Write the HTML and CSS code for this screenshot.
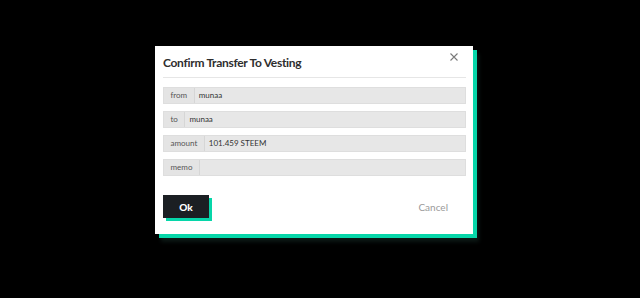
FILE: index.html
```html
<!DOCTYPE html>
<html>
<head>
<meta charset="utf-8">
<link rel="stylesheet" href="styles.css">
</head>
<body>
<div class="modal">
  <div class="header">
    <h1 class="title">Confirm Transfer To Vesting</h1>
    <button class="close" aria-label="Close">
      <svg width="8" height="8" viewBox="0 0 8 8"><path d="M0.5 0.5 L7.5 7.5 M7.5 0.5 L0.5 7.5" stroke="#7a7a7a" stroke-width="1.1" fill="none"/></svg>
    </button>
  </div>
  <div class="rule"></div>
  <div class="fields">
    <div class="group"><span class="label">from</span><span class="value">munaa</span></div>
    <div class="group"><span class="label">to</span><span class="value">munaa</span></div>
    <div class="group"><span class="label">amount</span><span class="value">101.459 STEEM</span></div>
    <div class="group"><span class="label">memo</span><span class="value"></span></div>
  </div>
  <div class="actions">
    <button class="ok">Ok</button>
    <button class="cancel">Cancel</button>
  </div>
</div>
</body>
</html>
```
FILE: styles.css
```css
html, body {
  margin: 0;
  background: #000;
}
body {
  width: 640px;
  height: 298px;
  box-sizing: border-box;
  padding: 46px 0 0 155px;
  font-family: "Lato", "Liberation Sans", sans-serif;
}
.modal {
  width: 318px;
  height: 188px;
  box-sizing: border-box;
  background: #fff;
  box-shadow: 4px 4px 0 #06d6a9, 6px 8px 4px rgba(20,40,35,0.6);
  padding: 6px 7px 0 8px;
  display: flex;
  flex-direction: column;
}
.header {
  display: flex;
  align-items: flex-start;
  justify-content: space-between;
  height: 24px;
}
.title {
  margin: 0;
  font-size: 12px;
  line-height: 16px;
  margin-top: 3px;
  font-weight: 700;
  color: #2e2e2e;
  letter-spacing: -0.3px;
}
.close {
  border: 0;
  background: none;
  padding: 0;
  margin: 1px 8px 0 0;
  width: 8px;
  height: 8px;
  display: flex;
}
.rule {
  height: 1px;
  background: #e6e6e6;
  margin-top: 1px;
}
.fields {
  display: flex;
  flex-direction: column;
  gap: 7px;
  margin-top: 9px;
}
.group {
  display: flex;
  height: 17px;
  box-sizing: border-box;
  border: 1px solid #dedede;
  background: #e7e7e7;
  font-size: 8px;
  line-height: 15px;
}
.label {
  padding: 0 6.5px;
  color: #555;
  border-right: 1px solid #d6d6d6;
  background: #e4e4e4;
}
.value {
  padding: 0 4px;
  color: #333;
  flex: 1;
}
.actions {
  display: flex;
  justify-content: space-between;
  align-items: center;
  margin-top: 19px;
}
.ok {
  width: 46px;
  height: 23px;
  border: 0;
  background: #1b1f23;
  color: #fff;
  font-family: "Lato", "Liberation Sans", sans-serif;
  font-weight: 900;
  font-size: 10px;
  box-shadow: 3px 3px 0 #06d6a9;
  padding: 0;
}
.cancel {
  border: 0;
  background: none;
  color: #9a9a9a;
  font-family: "Lato", "Liberation Sans", sans-serif;
  font-size: 10px;
  padding: 0 18px 0 0;
}
```
